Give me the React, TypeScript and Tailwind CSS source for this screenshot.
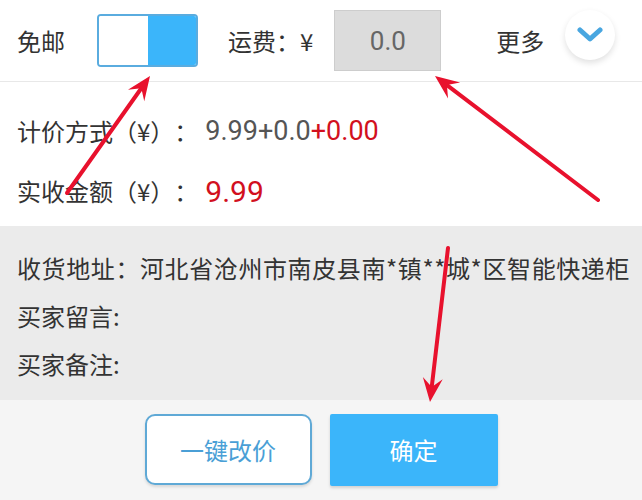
import React from 'react'

type Pt = [number, number]

// red annotation arrow: shaft + barbed head
function Arrow({ from, to }: { from: Pt; to: Pt }) {
  const dx = to[0] - from[0]
  const dy = to[1] - from[1]
  const len = Math.hypot(dx, dy)
  const ux = dx / len
  const uy = dy / len
  const px = -uy
  const py = ux
  const back = 24
  const half = 10
  const notch = 15
  const bx = to[0] - ux * back
  const by = to[1] - uy * back
  const w1: Pt = [bx + px * half, by + py * half]
  const w2: Pt = [bx - px * half, by - py * half]
  const n: Pt = [to[0] - ux * notch, to[1] - uy * notch]
  return (
    <g>
      <line
        x1={from[0]}
        y1={from[1]}
        x2={n[0]}
        y2={n[1]}
        stroke="#e8112d"
        strokeWidth={4}
        strokeLinecap="round"
      />
      <polygon
        points={`${to[0]},${to[1]} ${w1[0]},${w1[1]} ${n[0]},${n[1]} ${w2[0]},${w2[1]}`}
        fill="#e8112d"
      />
    </g>
  )
}

const num = "font-[family-name:Roboto,sans-serif]"

export default function App() {
  return (
    <div className="relative w-[642px] h-[500px] overflow-hidden bg-white font-[family-name:'Noto_Sans_CJK_SC',sans-serif] text-[#333] [text-spacing-trim:space-all]">
      {/* Top row */}
      <div className="flex items-center h-[82px] pl-[17px] border-b border-[#e8e8e8]">
        <span className="text-[24px] leading-none">免邮</span>
        <div className="ml-[32px] flex w-[101px] h-[53px] rounded-[4px] border-2 border-[#5aacdf] overflow-hidden">
          <div className="flex-1 bg-white" />
          <div className="flex-1 bg-[#3bb5fa]" />
        </div>
        <span className="ml-[30px] text-[24px] leading-none">运费：¥</span>
        <div className="ml-[21px] flex items-center justify-center w-[107px] h-[61px] bg-[#dcdcdc] border border-[#cdcdcd]">
          <span className={`${num} text-[26px] text-[#666] leading-none`}>0.0</span>
        </div>
        <span className="ml-[55px] text-[24px] leading-none">更多</span>
        <div className="ml-[21px] self-start mt-[10px] flex items-center justify-center w-[50px] h-[50px] rounded-full bg-white shadow-[0_3px_6px_rgba(0,0,0,0.12)]">
          <svg width="26" height="16" viewBox="0 0 26 16">
            <polyline
              points="3,3 13,12 23,3"
              fill="none"
              stroke="#48a6e0"
              strokeWidth="5"
              strokeLinecap="round"
              strokeLinejoin="round"
            />
          </svg>
        </div>
      </div>

      {/* Price rows */}
      <div className="flex flex-col h-[144px] pt-[19px] pl-[17px]">
        <div className="flex items-center h-[60px]">
          <span className="text-[24px]">计价方式（¥）：</span>
          <span className={`${num} ml-[7px] text-[27px] text-[#555]`}>9.99+0.0</span>
          <span className={`${num} text-[27px] text-[#d2101e]`}>+0.00</span>
        </div>
        <div className="flex items-center h-[60px]">
          <span className="text-[24px]">实收金额（¥）：</span>
          <span className={`${num} ml-[7px] text-[30px] text-[#d2101e]`}>9.99</span>
        </div>
      </div>

      {/* Order info */}
      <div className="flex flex-col h-[174px] pt-[18px] pl-[17px] bg-[#ebebeb]">
        <div className="flex items-center h-[48px] text-[24px] tracking-[0.6px]">收货地址：河北省沧州市南皮县南*镇**城*区智能快递柜</div>
        <div className="flex items-center h-[48px] text-[24px]">买家留言:</div>
        <div className="flex items-center h-[48px] text-[24px]">买家备注:</div>
      </div>

      {/* Buttons */}
      <div className="flex justify-center gap-[18px] h-[100px] pt-[14px] bg-[#f5f5f5]">
        <button className="w-[167px] h-[71px] rounded-[10px] border-2 border-[#5fa9d6] bg-white text-[24px] text-[#4a9fd6] shadow-[0_2px_3px_rgba(0,0,0,0.12)]">
          一键改价
        </button>
        <button className="w-[168px] h-[72px] rounded-[2px] bg-[#3bb5fa] text-[24px] text-white shadow-[0_2px_3px_rgba(0,0,0,0.15)]">
          确定
        </button>
      </div>

      {/* Annotation arrows */}
      <svg className="absolute inset-0 pointer-events-none" width="642" height="500">
        <Arrow from={[67, 193]} to={[150, 76]} />
        <Arrow from={[598, 200]} to={[435, 76]} />
        <Arrow from={[448, 248]} to={[430, 402]} />
      </svg>
    </div>
  )
}
